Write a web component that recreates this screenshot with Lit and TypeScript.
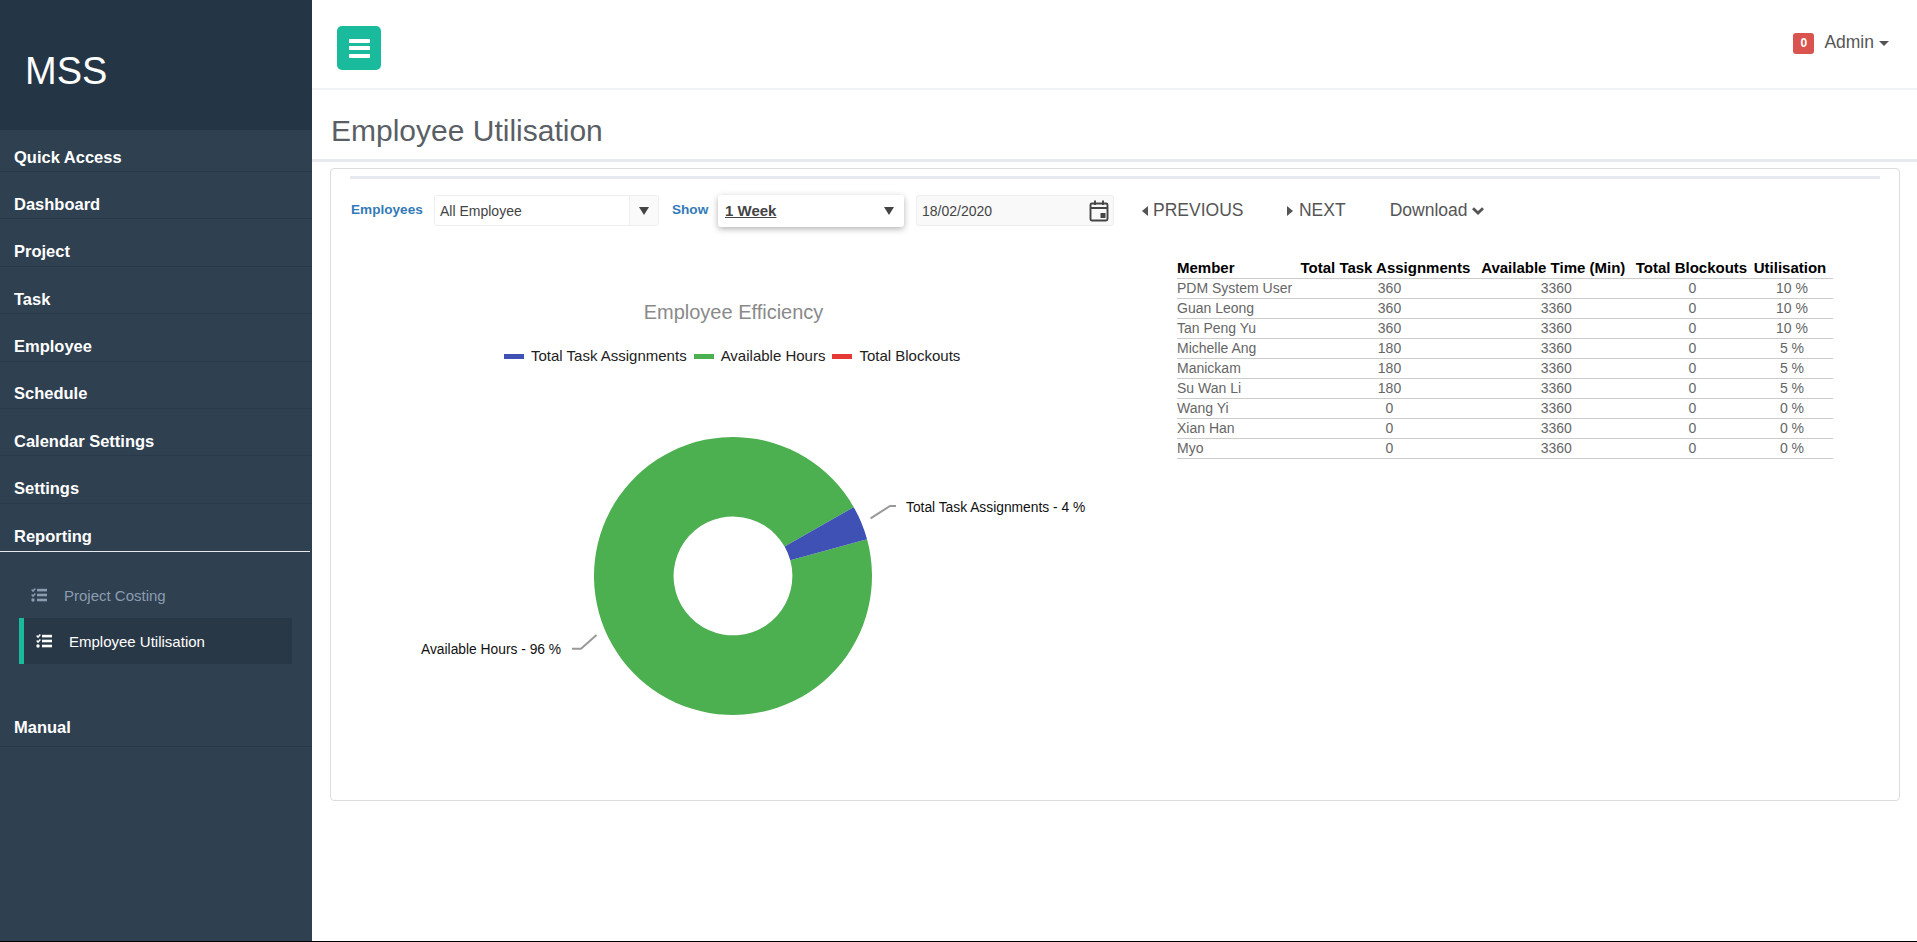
import { LitElement, html, css, svg } from 'lit'
import { customElement } from 'lit/decorators.js'

const NAV_TOP = ['Quick Access', 'Dashboard', 'Project', 'Task', 'Employee', 'Schedule', 'Calendar Settings', 'Settings']

const ROWS = [
  ['PDM System User', '360', '3360', '0', '10 %'],
  ['Guan Leong', '360', '3360', '0', '10 %'],
  ['Tan Peng Yu', '360', '3360', '0', '10 %'],
  ['Michelle Ang', '180', '3360', '0', '5 %'],
  ['Manickam', '180', '3360', '0', '5 %'],
  ['Su Wan Li', '180', '3360', '0', '5 %'],
  ['Wang Yi', '0', '3360', '0', '0 %'],
  ['Xian Han', '0', '3360', '0', '0 %'],
  ['Myo', '0', '3360', '0', '0 %'],
]

const LEGEND = [
  ['Total Task Assignments', '#3f51b5'],
  ['Available Hours', '#4caf50'],
  ['Total Blockouts', '#e53935'],
]

// donut geometry, angles in degrees counter-clockwise from +x
const CX = 140
const CY = 140
const R_OUT = 139
const R_IN = 59.4
const polar = (r: number, deg: number): string => {
  const a = (deg * Math.PI) / 180
  return `${(CX + r * Math.cos(a)).toFixed(2)} ${(CY - r * Math.sin(a)).toFixed(2)}`
}
const sliceBlue = `M${polar(R_OUT, 29.7)} A${R_OUT} ${R_OUT} 0 0 1 ${polar(R_OUT, 15.3)} L${polar(R_IN, 15.3)} A${R_IN} ${R_IN} 0 0 0 ${polar(R_IN, 29.7)} Z`
const sliceGreen = `M${polar(R_OUT, 15.3)} A${R_OUT} ${R_OUT} 0 1 1 ${polar(R_OUT, 29.7)} L${polar(R_IN, 29.7)} A${R_IN} ${R_IN} 0 1 0 ${polar(R_IN, 15.3)} Z`

const tasksIcon = svg`<svg class="tasks" viewBox="0 0 16 14" width="16" height="14" fill="currentColor">
  <path d="M0.2 2.1 L1.2 1.1 L2 1.9 L3.8 0 L4.9 1 L2 4.2 Z"/>
  <path d="M0.2 7.1 L1.2 6.1 L2 6.9 L3.8 5 L4.9 6 L2 9.2 Z"/>
  <circle cx="2" cy="12" r="1.7"/>
  <rect x="6" y="0.8" width="10" height="2.6"/>
  <rect x="6" y="5.7" width="10" height="2.6"/>
  <rect x="6" y="10.7" width="10" height="2.6"/>
</svg>`

@customElement('app-root')
export class AppRoot extends LitElement {
  static override styles = css`
    :host {
      display: flex;
      height: 942px;
      box-sizing: border-box;
      border-bottom: 1px solid #000;
      overflow: hidden;
      background: #fff;
      font-family: 'Liberation Sans', Arial, sans-serif;
      color: #555;
      font-size: 14px;
    }
    .sidebar {
      width: 312px;
      flex-shrink: 0;
      background: #2f4050;
      display: flex;
      flex-direction: column;
    }
    .brand {
      height: 130px;
      background: #243645;
      color: #fff;
      font-size: 38px;
      line-height: 142px;
      padding-left: 25px;
    }
    .nav-item {
      height: 47.4px;
      font-size: 16.5px;
      line-height: 18px;
      font-weight: bold;
      color: #fff;
    }
    .nav-label {
      height: 42px;
      box-sizing: border-box;
      padding: 17.5px 0 0 14px;
      border-bottom: 1px solid #2a3a49;
    }
    .nav-item.open {
      height: 43px;
    }
    .nav-item.open .nav-label {
      width: 310px;
      height: 43px;
      border-bottom: 1px solid #e6e9ed;
    }
    .nav-item.manual .nav-label {
      height: 47px;
    }
    .sub {
      padding: 20px 0 36px 19px;
      display: flex;
      flex-direction: column;
    }
    .sub-item {
      width: 273px;
      height: 46px;
      box-sizing: border-box;
      display: flex;
      align-items: center;
      gap: 17px;
      padding-left: 12px;
      font-size: 15px;
      color: #8c9cb0;
    }
    .sub-item.active {
      background: #293846;
      border-left: 5px solid #1abb9c;
      color: #fff;
    }
    .main {
      flex: 1;
      min-width: 0;
      display: flex;
      flex-direction: column;
    }
    .topbar {
      height: 90px;
      box-sizing: border-box;
      border-bottom: 2px solid #f1f2f4;
      display: flex;
      align-items: flex-start;
      justify-content: space-between;
      padding: 26px 28px 0 25px;
    }
    .burger {
      width: 44px;
      height: 44px;
      border-radius: 5px;
      background: #1abb9c;
      display: flex;
      flex-direction: column;
      align-items: center;
      justify-content: center;
      gap: 3.5px;
    }
    .burger span {
      width: 21px;
      height: 4px;
      background: #fff;
    }
    .user {
      display: flex;
      align-items: center;
      gap: 10px;
      font-size: 17.5px;
      line-height: 22px;
      margin-top: 5px;
    }
    .user .name {
      padding-bottom: 2px;
    }
    .badge {
      width: 21px;
      height: 21px;
      border-radius: 3px;
      background: #d9534f;
      color: #fff;
      font-size: 12px;
      font-weight: bold;
      display: flex;
      align-items: center;
      justify-content: center;
    }
    .caret {
      display: inline-block;
      border-left: 5px solid transparent;
      border-right: 5px solid transparent;
      border-top: 5px solid #555;
      margin-left: -5px;
    }
    .title {
      height: 72px;
      box-sizing: border-box;
      border-bottom: 3px solid #e6e9ed;
      padding: 23px 0 0 19px;
      font-size: 30px;
      line-height: 36px;
      color: #5a5f66;
    }
    .card {
      margin: 6px 17px 0 18px;
      height: 633px;
      box-sizing: border-box;
      border: 1px solid #ddd;
      border-radius: 4px;
      padding: 7px 19px 0 19px;
    }
    .rule {
      height: 3px;
      background: #e6e9ed;
    }
    .filters {
      display: flex;
      align-items: flex-start;
      margin-top: 16px;
      height: 32px;
      margin-left: 1px;
    }
    .label {
      font-size: 13.6px;
      font-weight: bold;
      color: #337ab7;
      line-height: 30px;
      white-space: nowrap;
    }
    .label.emp {
      width: 72px;
    }
    .label.show {
      width: 36px;
    }
    .select {
      box-sizing: border-box;
      height: 31px;
      border: 1px solid #eee;
      border-radius: 3px;
      display: flex;
      align-items: center;
      color: #444;
    }
    .select.emp {
      width: 225px;
      margin: 0 13px 0 11px;
    }
    .select .val {
      flex: 1;
      padding-left: 5px;
    }
    .select .drop {
      width: 28px;
      height: 100%;
      border-left: 1px solid #eee;
      background: #fafafa;
      display: flex;
      align-items: center;
      justify-content: center;
    }
    .tri {
      border-left: 5.5px solid transparent;
      border-right: 5.5px solid transparent;
      border-top: 8px solid #444;
    }
    .select.show {
      width: 186px;
      height: 32px;
      margin: 0 12px 0 10px;
      border: none;
      box-shadow: 0 2px 6px rgba(0, 0, 0, 0.3);
      font-weight: bold;
      font-size: 15px;
    }
    .select.show .val {
      padding: 0 0 2px 7px;
      text-decoration: underline;
    }
    .select.show .drop {
      background: none;
      border: none;
      width: 30px;
    }
    .date {
      box-sizing: border-box;
      width: 198px;
      height: 31px;
      border: 1px solid #eee;
      border-radius: 3px;
      background: #f9f9f9;
      display: flex;
      align-items: center;
      justify-content: space-between;
      padding: 0 4px 0 5px;
      color: #444;
    }
    .btn {
      display: flex;
      align-items: center;
      font-size: 17.5px;
      line-height: 31px;
      color: #555;
    }
    .prev {
      margin-left: 28px;
      gap: 5px;
    }
    .next {
      margin-left: 44px;
      gap: 5.5px;
    }
    .dl {
      margin-left: 44px;
      gap: 5px;
    }
    .arrow-l {
      border-top: 5.5px solid transparent;
      border-bottom: 5.5px solid transparent;
      border-right: 6px solid #555;
    }
    .arrow-r {
      border-top: 5.5px solid transparent;
      border-bottom: 5.5px solid transparent;
      border-left: 6px solid #555;
    }
    .body {
      display: flex;
      align-items: flex-start;
    }
    .chart {
      width: 788px;
      flex-shrink: 0;
      position: relative;
      height: 560px;
    }
    .chart-title {
      position: absolute;
      left: 0;
      width: 767px;
      top: 73px;
      text-align: center;
      font-size: 20px;
      line-height: 24px;
      color: #8a8a8a;
    }
    .legend {
      position: absolute;
      top: 120px;
      left: 154px;
      display: flex;
      align-items: center;
      gap: 7px;
      font-size: 15px;
      line-height: 18px;
      color: #222;
      white-space: nowrap;
    }
    .legend i {
      width: 20px;
      height: 5px;
    }
    .legend span {
      display: flex;
      align-items: center;
      gap: 7px;
    }
    .donut {
      position: absolute;
      left: 243px;
      top: 209px;
    }
    .leader {
      position: absolute;
      left: 0;
      top: 0;
    }
    .pie-label {
      position: absolute;
      font-size: 13.8px;
      line-height: 16px;
      color: #111;
      white-space: nowrap;
    }
    table {
      border-collapse: collapse;
      table-layout: fixed;
      width: 656px;
      margin: 32px 0 0 39px;
      font-size: 14px;
    }
    th {
      color: #000;
      font-size: 15px;
      font-weight: bold;
      text-align: center;
      height: 17px;
      padding: 0 0 2px;
      line-height: 17px;
      white-space: nowrap;
      border-bottom: 1px solid #ccc;
    }
    th:nth-child(2) {
      padding-right: 9px;
    }
    th:nth-child(3) {
      padding-right: 6px;
    }
    th:nth-child(4) {
      padding-right: 2px;
    }
    th:nth-child(5) {
      padding-right: 4px;
    }
    td {
      height: 18px;
      padding: 0 0 1px;
      line-height: 18px;
      text-align: center;
      color: #666;
      border-bottom: 1px solid #ccc;
      white-space: nowrap;
    }
    th:first-child,
    td:first-child {
      text-align: left;
    }
  `

  override render() {
    return html`
      <aside class="sidebar">
        <div class="brand">MSS</div>
        ${NAV_TOP.map(n => html`<div class="nav-item"><div class="nav-label">${n}</div></div>`)}
        <div class="nav-item open"><div class="nav-label">Reporting</div></div>
        <div class="sub">
          <div class="sub-item">${tasksIcon}<span>Project Costing</span></div>
          <div class="sub-item active">${tasksIcon}<span>Employee Utilisation</span></div>
        </div>
        <div class="nav-item manual"><div class="nav-label">Manual</div></div>
      </aside>
      <main class="main">
        <header class="topbar">
          <div class="burger"><span></span><span></span><span></span></div>
          <div class="user"><span class="badge">0</span><span class="name">Admin</span><i class="caret"></i></div>
        </header>
        <div class="title">Employee Utilisation</div>
        <section class="card">
          <div class="rule"></div>
          <div class="filters">
            <span class="label emp">Employees</span>
            <div class="select emp"><span class="val">All Employee</span><span class="drop"><i class="tri"></i></span></div>
            <span class="label show">Show</span>
            <div class="select show"><span class="val">1 Week</span><span class="drop"><i class="tri"></i></span></div>
            <div class="date">
              <span>18/02/2020</span>
              <svg viewBox="0 0 20 22" width="20" height="22" fill="none" stroke="#444" stroke-width="1.9">
                <rect x="1.5" y="3.5" width="17" height="17" rx="1.5"/>
                <path d="M1.5 8 H18.5 M6 0.5 V5 M14 0.5 V5"/>
                <rect x="11.5" y="13" width="5" height="5" fill="#444" stroke="none"/>
              </svg>
            </div>
            <div class="btn prev"><i class="arrow-l"></i>PREVIOUS</div>
            <div class="btn next"><i class="arrow-r"></i>NEXT</div>
            <div class="btn dl">Download
              <svg viewBox="0 0 12 8" width="12" height="8" fill="none" stroke="#555" stroke-width="2.8"><path d="M1 1.2 L6 6 L11 1.2"/></svg>
            </div>
          </div>
          <div class="body">
            <div class="chart">
              <div class="chart-title">Employee Efficiency</div>
              <div class="legend">
                ${LEGEND.map(([t, c]) => html`<span><i style="background:${c}"></i>${t}</span>`)}
              </div>
              <svg class="donut" viewBox="0 0 280 280" width="280" height="280">
                <path d=${sliceGreen} fill="#4caf50"/>
                <path d=${sliceBlue} fill="#3f51b5"/>
              </svg>
              <svg class="leader" width="788" height="560" fill="none" stroke="#999" stroke-width="2">
                <path d="M520.6 291.3 L540 279 L546 279"/>
                <path d="M246.5 408 L231 421.7 L222 421.7"/>
              </svg>
              <div class="pie-label" style="left:556px;top:273px">Total Task Assignments - 4 %</div>
              <div class="pie-label" style="left:71px;top:415px">Available Hours - 96 %</div>
            </div>
            <table>
              <colgroup><col style="width:123.5px"/><col style="width:178px"/><col style="width:155.5px"/><col style="width:117px"/><col style="width:82px"/></colgroup>
              <thead><tr><th>Member</th><th>Total Task Assignments</th><th>Available Time (Min)</th><th>Total Blockouts</th><th>Utilisation</th></tr></thead>
              <tbody>
                ${ROWS.map(r => html`<tr>${r.map(c => html`<td>${c}</td>`)}</tr>`)}
              </tbody>
            </table>
          </div>
        </section>
      </main>
    `
  }
}
